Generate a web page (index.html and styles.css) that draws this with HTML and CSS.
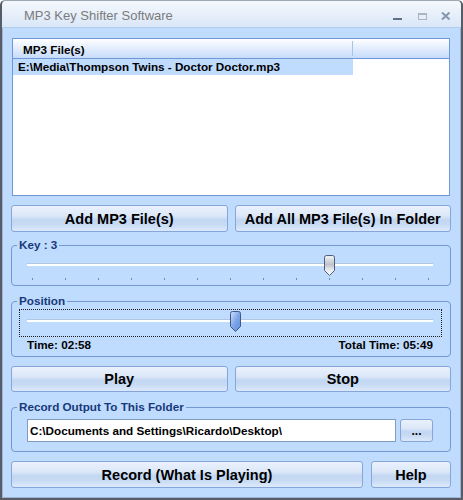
FILE: index.html
```html
<!DOCTYPE html>
<html>
<head>
<meta charset="utf-8">
<link rel="stylesheet" href="styles.css">
</head>
<body>
<div class="window">
  <div class="titlebar">
    <span class="title">MP3 Key Shifter Software</span>
    <div class="controls">
      <svg class="ctl ctl-min" width="10" height="9" viewBox="0 0 10 9"><rect x="0" y="6" width="9" height="2" fill="#5f7088"/></svg>
      <svg class="ctl ctl-max" width="10" height="9" viewBox="0 0 10 9"><rect x="0.5" y="1.5" width="8" height="6" fill="none" stroke="#aab4c2"/><rect x="0" y="1" width="9" height="2" fill="#aab4c2"/></svg>
      <svg class="ctl ctl-close" width="10" height="9" viewBox="0 0 10 9"><path d="M1 0.5 L8.5 7.5 M8.5 0.5 L1 7.5" stroke="#8797ad" stroke-width="2" fill="none"/></svg>
    </div>
  </div>
  <div class="content">
    <div class="list">
      <div class="list-head">
        <span class="col1">MP3 File(s)</span><span class="col-sep"></span>
      </div>
      <div class="list-row"><span class="cell selected">E:\Media\Thompson Twins - Doctor Doctor.mp3</span></div>
    </div>

    <div class="btnrow two">
      <button class="btn">Add MP3 File(s)</button>
      <button class="btn">Add All MP3 File(s) In Folder</button>
    </div>

    <div class="group group-key">
      <span class="legend">Key : 3</span>
      <div class="slider slider-key">
        <div class="track"></div>
        <svg class="thumb" style="left:73.1%" width="11" height="21" viewBox="0 0 11 21">
          <defs>
            <linearGradient id="gk" x1="0" y1="0" x2="0" y2="1">
              <stop offset="0" stop-color="#f2f3f5"/>
              <stop offset="0.45" stop-color="#bfc4cc"/>
              <stop offset="0.7" stop-color="#e6e8ec"/>
              <stop offset="1" stop-color="#ffffff"/>
            </linearGradient>
          </defs>
          <path d="M0.5 2.5 Q0.5 0.5 2.5 0.5 H8.5 Q10.5 0.5 10.5 2.5 V15.5 L5.5 20.5 L0.5 15.5 Z" fill="url(#gk)" stroke="#4e5d79"/>
        </svg>
      </div>
      <div class="ticks">
        <i></i><i></i><i></i><i></i><i></i><i></i><i></i><i></i><i></i><i></i><i></i><i></i><i></i>
      </div>
    </div>

    <div class="group group-pos">
      <span class="legend">Position</span>
      <div class="focus">
        <div class="slider slider-pos">
          <div class="track"></div>
          <svg class="thumb" style="left:50%" width="11" height="21" viewBox="0 0 11 21">
            <defs>
              <linearGradient id="gp" x1="0" y1="0" x2="1" y2="1">
                <stop offset="0" stop-color="#d2e2fa"/>
                <stop offset="0.5" stop-color="#7ea6e6"/>
                <stop offset="1" stop-color="#5d8ddc"/>
              </linearGradient>
            </defs>
            <path d="M0.5 2.5 Q0.5 0.5 2.5 0.5 H8.5 Q10.5 0.5 10.5 2.5 V15.5 L5.5 20.5 L0.5 15.5 Z" fill="url(#gp)" stroke="#3f5a8a"/>
          </svg>
        </div>
      </div>
      <div class="times">
        <span>Time: 02:58</span>
        <span>Total Time: 05:49</span>
      </div>
    </div>

    <div class="btnrow two playrow">
      <button class="btn">Play</button>
      <button class="btn">Stop</button>
    </div>

    <div class="group group-rec">
      <span class="legend">Record Output To This Folder</span>
      <div class="rec-row">
        <input class="path" type="text" value="C:\Documents and Settings\Ricardo\Desktop\" readonly>
        <button class="btn browse">...</button>
      </div>
    </div>

    <div class="btnrow bottom">
      <button class="btn">Record (What Is Playing)</button>
      <button class="btn">Help</button>
    </div>
  </div>
</div>
</body>
</html>
```
FILE: styles.css
```css
* { box-sizing: border-box; }
html, body { margin: 0; padding: 0; }
body {
  width: 463px;
  height: 500px;
  overflow: hidden;
  background: #ffffff;
  font-family: "Liberation Sans", Arial, sans-serif;
}
.window {
  width: 463px;
  height: 500px;
  border: 2px solid #565c68;
  border-top: 1px solid #9ea7b4;
  border-radius: 5px 5px 0 0;
  background: #bfdbfe;
  box-shadow: inset 1px 0 0 #9db4d4, inset -1px 0 0 #9db4d4, inset 0 -1px 0 #9db4d4;
  display: flex;
  flex-direction: column;
  overflow: hidden;
}
.titlebar {
  flex: none;
  height: 27px;
  display: flex;
  align-items: flex-start;
  justify-content: space-between;
  background: linear-gradient(#f5f8fc, #d9e7f8);
  border-bottom: 1px solid #b3cae9;
  border-radius: 4px 4px 0 0;
}
.title {
  padding: 7px 0 0 22px;
  font-size: 13px;
  line-height: 16px;
  color: #7b7b7b;
}
.controls {
  display: flex;
  padding: 11px 10px 0 0;
}
.ctl { display: block; }
.ctl-max { margin-left: 15px; }
.ctl-close { margin-left: 13px; }

.content {
  flex: 1;
  display: flex;
  flex-direction: column;
  padding: 10px 10px 0 9px;
}

/* list */
.list {
  flex: none;
  height: 158px;
  margin: 0 1px;
  border: 1px solid #6f98d6;
  background: #ffffff;
}
.list-head {
  height: 20px;
  display: flex;
  align-items: flex-start;
  background: linear-gradient(#ffffff, #c6dbfa);
  border-bottom: 1px solid #6f98d6;
}
.col1 {
  width: 339px;
  padding: 2px 0 0 10px;
  font-weight: bold;
  font-size: 11.7px;
  line-height: 17px;
  color: #000;
}
.col-sep {
  width: 1px;
  height: 15px;
  margin-top: 2px;
  background: #a8c4ee;
}
.list-row { height: 16px; display: flex; }
.cell {
  width: 340px;
  padding-left: 5px;
  font-weight: bold;
  font-size: 11.7px;
  line-height: 16px;
  color: #000;
  white-space: nowrap;
}
.cell.selected { background: #bfdbfe; }

/* buttons */
.btnrow {
  flex: none;
  display: grid;
  height: 27px;
  margin-top: 9px;
}
.btnrow.two { grid-template-columns: 1fr 1fr; column-gap: 7px; }
.btnrow.playrow { height: 26px; }
.btnrow.bottom { grid-template-columns: 1fr 80px; column-gap: 8px; }
.btn {
  margin: 0;
  padding: 0;
  font-family: "Liberation Sans", Arial, sans-serif;
  font-weight: bold;
  font-size: 14.5px;
  color: #000;
  border: 1px solid #86a6d9;
  border-radius: 3px;
  background: linear-gradient(#eaf1fc 0%, #dbe7f8 40%, #c3d7f2 55%, #c8dbf4 75%, #dde9fa 100%);
}

/* groups */
.group {
  flex: none;
  position: relative;
  border: 1px solid #7399d3;
  border-radius: 4px;
}
.legend {
  position: absolute;
  top: -8px;
  left: 5px;
  padding: 0 2px;
  background: #bfdbfe;
  font-weight: bold;
  font-size: 11.7px;
  line-height: 14px;
  color: #17397a;
  white-space: nowrap;
}

.slider {
  position: relative;
  height: 21px;
  padding-top: 8px;
}
.track {
  height: 3px;
  background: #ffffff;
  border-top: 1px solid #b4c6de;
}
.thumb {
  position: absolute;
  top: 0;
  display: block;
}
.group-key { margin-top: 13px; padding: 9px 0 5px 0; }
.slider-key { margin: 0 17px 0 15px; }
.ticks {
  display: flex;
  justify-content: space-between;
  margin: 2px 21px 0 20px;
  height: 2px;
}
.ticks i {
  display: block;
  width: 1px;
  height: 2px;
  background: #6f89b2;
}

.group-pos { margin-top: 15px; padding: 7px 0 4px 0; }
.focus {
  margin: 0 8px 0 7px;
  padding: 1px 8px 4px 7px;
  border: 1px dotted #1d1d1d;
}
.times {
  display: flex;
  justify-content: space-between;
  margin-top: 1px;
  padding: 0 17px 0 15px;
  font-weight: bold;
  font-size: 11.7px;
  line-height: 14px;
  color: #000;
}

.group-rec { margin-top: 15px; padding: 11px 17px 9px 15px; }
.rec-row {
  display: flex;
  column-gap: 4px;
  height: 23px;
}
.path {
  flex: 1;
  min-width: 0;
  height: 23px;
  margin: 0;
  padding: 0 2px;
  border: 1px solid #7f9dc0;
  background: #ffffff;
  font-family: "Liberation Sans", Arial, sans-serif;
  font-weight: bold;
  font-size: 11.7px;
  color: #000;
  outline: none;
}
.browse {
  width: 33px;
  height: 23px;
  font-size: 12px;
  line-height: 12px;
}
```
